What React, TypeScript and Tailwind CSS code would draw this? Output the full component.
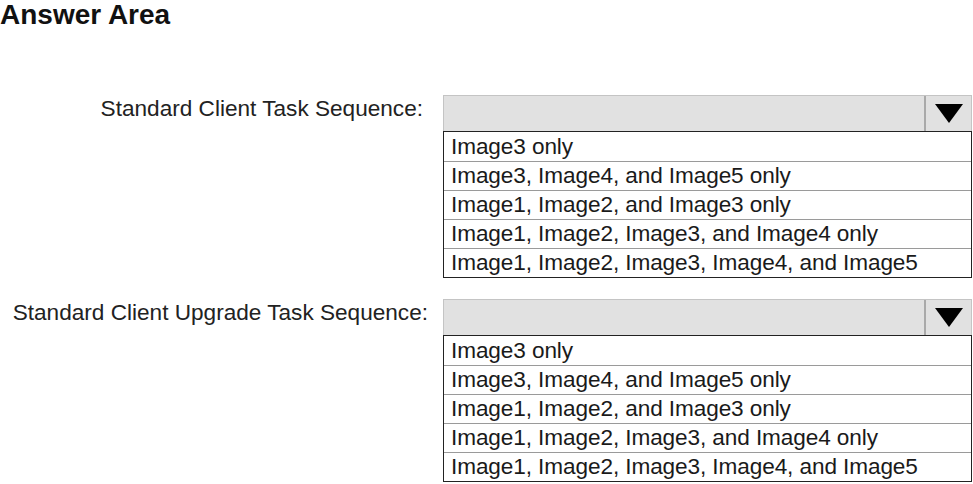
import React from "react";

const options = [
  "Image3 only",
  "Image3, Image4, and Image5 only",
  "Image1, Image2, and Image3 only",
  "Image1, Image2, Image3, and Image4 only",
  "Image1, Image2, Image3, Image4, and Image5",
];

function Arrow() {
  return (
    <svg width="28" height="19" viewBox="0 0 28 19">
      <polygon points="0,0 28,0 14,19" fill="#000" />
    </svg>
  );
}

interface RowProps {
  label: string;
  labelPad: string;
}

function DropdownRow({ label, labelPad }: RowProps) {
  return (
    <div className="flex">
      <div className="w-[443px] shrink-0">
        <p className={`h-[36px] pb-[8px] flex items-center justify-end text-[22.6px] text-[#222] ${labelPad}`}>
          {label}
        </p>
      </div>
      <div className="w-[529px] shrink-0">
        <div className="h-[36px] flex bg-[#e1e1e1] border border-[#c4c4c4] border-b-0">
          <div className="flex-1" />
          <div className="w-[47px] flex items-center justify-center border-l-2 border-[#a9a9a9]">
            <Arrow />
          </div>
        </div>
        <div className="border border-[#222] bg-white">
          {options.map((opt, i) => (
            <div
              key={opt}
              className={`h-[29px] flex items-center pl-[7px] text-[22.6px] tracking-[-0.1px] text-[#1a1a1a] ${
                i > 0 ? "border-t border-[#9a9a9a]" : ""
              }`}
            >
              {opt}
            </div>
          ))}
        </div>
      </div>
    </div>
  );
}

export default function App() {
  return (
    <div
      className="w-[973px] h-[484px] bg-white overflow-hidden"
      style={{ fontFamily: '"Liberation Sans", Arial, sans-serif' }}
    >
      <h1 className="text-[28px] font-bold leading-[30px] text-[#111]">Answer Area</h1>
      <div className="mt-[65px] flex flex-col gap-[21px]">
        <DropdownRow label="Standard Client Task Sequence:" labelPad="pr-[20px]" />
        <DropdownRow label="Standard Client Upgrade Task Sequence:" labelPad="pr-[15px]" />
      </div>
    </div>
  );
}
